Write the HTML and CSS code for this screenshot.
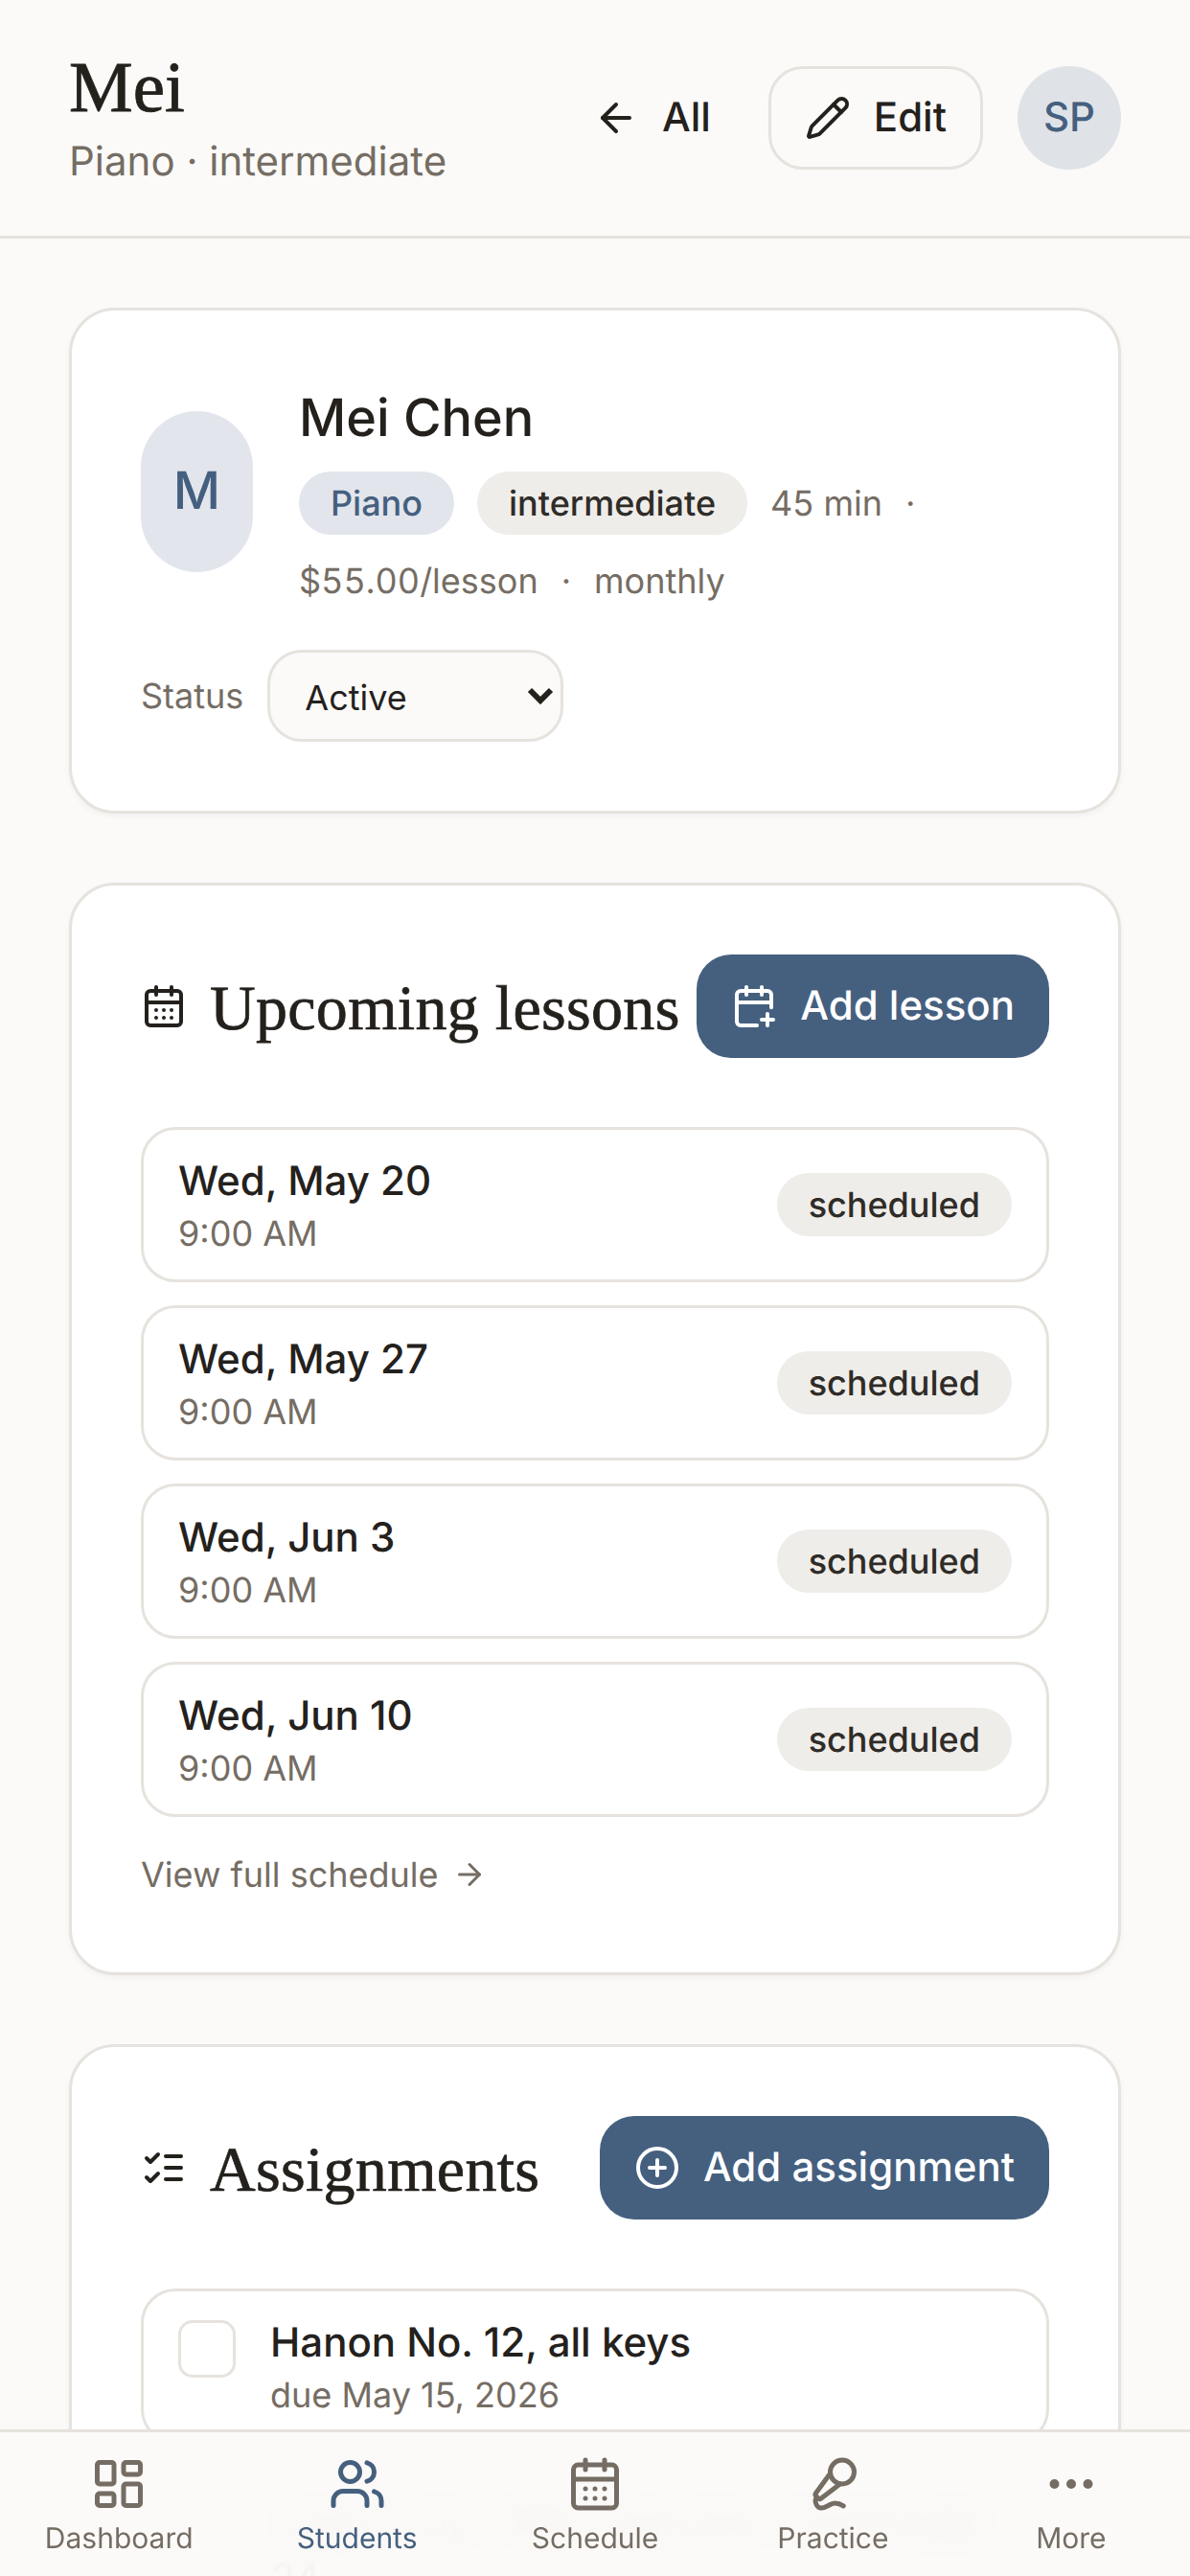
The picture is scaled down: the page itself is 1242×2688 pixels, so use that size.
FILE: index.html
```html
<!DOCTYPE html>
<html lang="en">
<head>
<meta charset="utf-8">
<title>Mei</title>
<link rel="stylesheet" href="styles.css">
</head>
<body>
<svg class="sprite" aria-hidden="true">
  <symbol id="i-left" viewBox="0 0 24 24"><path d="m12 19-7-7 7-7"/><path d="M19 12H5"/></symbol>
  <symbol id="i-right" viewBox="0 0 24 24"><path d="M5 12h14"/><path d="m12 5 7 7-7 7"/></symbol>
  <symbol id="i-pencil" viewBox="0 0 24 24"><path d="M21.174 6.812a1 1 0 0 0-3.986-3.987L3.842 16.174a2 2 0 0 0-.5.83l-1.321 4.352a.5.5 0 0 0 .623.622l4.353-1.32a2 2 0 0 0 .83-.497z"/><path d="m15 5 4 4"/></symbol>
  <symbol id="i-cal" viewBox="0 0 24 24"><path d="M8 2v4"/><path d="M16 2v4"/><rect width="18" height="18" x="3" y="4" rx="2"/><path d="M3 10h18"/><path d="M8 14h.01"/><path d="M12 14h.01"/><path d="M16 14h.01"/><path d="M8 18h.01"/><path d="M12 18h.01"/><path d="M16 18h.01"/></symbol>
  <symbol id="i-calplus" viewBox="0 0 24 24"><path d="M16 19h6"/><path d="M16 2v4"/><path d="M19 16v6"/><path d="M21 12.598V6a2 2 0 0 0-2-2H5a2 2 0 0 0-2 2v14a2 2 0 0 0 2 2h8.5"/><path d="M3 10h18"/><path d="M8 2v4"/></symbol>
  <symbol id="i-checks" viewBox="0 0 24 24"><path d="m3 17 2 2 4-4"/><path d="m3 7 2 2 4-4"/><path d="M13 6h8"/><path d="M13 12h8"/><path d="M13 18h8"/></symbol>
  <symbol id="i-plus" viewBox="0 0 24 24"><circle cx="12" cy="12" r="10"/><path d="M8 12h8"/><path d="M12 8v8"/></symbol>
  <symbol id="i-dash" viewBox="0 0 24 24"><rect width="7" height="9" x="3" y="3" rx="1"/><rect width="7" height="5" x="14" y="3" rx="1"/><rect width="7" height="9" x="14" y="12" rx="1"/><rect width="7" height="5" x="3" y="16" rx="1"/></symbol>
  <symbol id="i-users" viewBox="0 0 24 24"><path d="M16 21v-2a4 4 0 0 0-4-4H6a4 4 0 0 0-4 4v2"/><circle cx="9" cy="7" r="4"/><path d="M22 21v-2a4 4 0 0 0-3-3.87"/><path d="M16 3.13a4 4 0 0 1 0 7.75"/></symbol>
  <symbol id="i-mic" viewBox="0 0 24 24"><path d="m11 7.601-5.994 8.19a1 1 0 0 0 .1 1.298l.817.818a1 1 0 0 0 1.314.087L15.09 12"/><path d="M16.5 21.174C15.5 20.5 14.372 20 13 20c-2.058 0-3.928 2.356-6 2-2.072-.356-2.775-3.369-1.5-4.5"/><circle cx="16" cy="7" r="5"/></symbol>
  <symbol id="i-more" viewBox="0 0 24 24"><circle cx="12" cy="12" r="1"/><circle cx="19" cy="12" r="1"/><circle cx="5" cy="12" r="1"/></symbol>
</svg>

<header class="topbar">
  <div class="topbar-title">
    <h1 class="page-title">Mei</h1>
    <p class="page-sub">Piano · intermediate</p>
  </div>
  <div class="topbar-actions">
    <a class="btn btn-ghost"><svg class="icon icon-16"><use href="#i-left"/></svg>All</a>
    <a class="btn btn-outline"><svg class="icon icon-16"><use href="#i-pencil"/></svg>Edit</a>
    <div class="user-avatar">SP</div>
  </div>
</header>

<main class="content">
  <section class="card">
    <div class="profile">
      <div class="profile-avatar">M</div>
      <div class="profile-info">
        <h2 class="profile-name">Mei Chen</h2>
        <div class="profile-meta">
          <span class="chip chip-blue">Piano</span>
          <span class="chip">intermediate</span>
          <span class="meta">45 min</span>
          <span class="meta">·</span>
          <span class="meta meta-num">$55.00/lesson</span>
          <span class="meta">·</span>
          <span class="meta">monthly</span>
        </div>
      </div>
    </div>
    <div class="status-row">
      <label class="status-label" for="status">Status</label>
      <div class="select-wrap">
        <select class="status-select" id="status">
          <option>Active</option>
          <option>Paused</option>
        </select>
        <svg class="select-chevron" viewBox="0 0 28 19"><path d="M3 4l11 11L25 4"/></svg>
      </div>
    </div>
  </section>

  <section class="card">
    <div class="section-head">
      <div class="section-title"><svg class="icon icon-16"><use href="#i-cal"/></svg><h2>Upcoming lessons</h2></div>
      <a class="btn btn-primary"><svg class="icon icon-16"><use href="#i-calplus"/></svg>Add lesson</a>
    </div>
    <ul class="list">
      <li class="row"><div><div class="row-title">Wed, May 20</div><div class="row-sub">9:00 AM</div></div><span class="chip">scheduled</span></li>
      <li class="row"><div><div class="row-title">Wed, May 27</div><div class="row-sub">9:00 AM</div></div><span class="chip">scheduled</span></li>
      <li class="row"><div><div class="row-title">Wed, Jun 3</div><div class="row-sub">9:00 AM</div></div><span class="chip">scheduled</span></li>
      <li class="row"><div><div class="row-title">Wed, Jun 10</div><div class="row-sub">9:00 AM</div></div><span class="chip">scheduled</span></li>
    </ul>
    <a class="more-link">View full schedule<svg class="icon icon-12"><use href="#i-right"/></svg></a>
  </section>

  <section class="card">
    <div class="section-head">
      <div class="section-title"><svg class="icon icon-16"><use href="#i-checks"/></svg><h2>Assignments</h2></div>
      <a class="btn btn-primary"><svg class="icon icon-16"><use href="#i-plus"/></svg>Add assignment</a>
    </div>
    <ul class="list">
      <li class="row row-task"><span class="checkbox"></span><div><div class="row-title">Hanon No. 12, all keys</div><div class="row-sub">due May 15, 2026</div></div></li>
      <li class="row row-task"><span class="checkbox"></span><div><div class="row-title">Czerny Op. 599, exercises 19 through 24</div><div class="row-sub">due May 22, 2026</div></div></li>
    </ul>
  </section>
</main>

<nav class="tabbar">
  <a class="tab"><svg class="icon icon-20"><use href="#i-dash"/></svg><span>Dashboard</span></a>
  <a class="tab tab-active"><svg class="icon icon-20"><use href="#i-users"/></svg><span>Students</span></a>
  <a class="tab"><svg class="icon icon-20"><use href="#i-cal"/></svg><span>Schedule</span></a>
  <a class="tab"><svg class="icon icon-20"><use href="#i-mic"/></svg><span>Practice</span></a>
  <a class="tab"><svg class="icon icon-20"><use href="#i-more"/></svg><span>More</span></a>
</nav>
</body>
</html>
```
FILE: styles.css
```css
* { box-sizing: border-box; margin: 0; padding: 0; }

html, body {
  width: 1242px;
  height: 2688px;
  overflow: hidden;
}

body {
  position: relative;
  background: #fbfaf8;
  color: #24211d;
  font-family: Inter, "Liberation Sans", sans-serif;
  font-size: 42px;
  line-height: 60px;
  text-rendering: geometricPrecision;
}

.sprite { display: none; }

.icon {
  flex: none;
  fill: none;
  stroke: currentColor;
  stroke-width: 2;
  stroke-linecap: round;
  stroke-linejoin: round;
}
.icon-12 { width: 36px; height: 36px; }
.icon-16 { width: 48px; height: 48px; }
.icon-20 { width: 60px; height: 60px; }

/* top bar */
.topbar {
  display: flex;
  align-items: center;
  justify-content: space-between;
  height: 249px;
  padding: 0 72px;
  border-bottom: 3px solid #e6e2dd;
}
.page-title {
  font-family: "Liberation Serif", serif;
  font-size: 75px;
  line-height: 90px;
  font-weight: 400;
  -webkit-text-stroke: 0.8px currentColor;
}
.page-sub { margin-top: 2px; color: #756d64; font-size: 42px; line-height: 60px; }
.topbar-actions { display: flex; align-items: center; }

.btn {
  display: flex;
  align-items: center;
  gap: 24px;
  height: 108px;
  border-radius: 36px;
  font-weight: 450;
  white-space: nowrap;
}
.btn-ghost { padding: 0 36px; margin-right: 24px; }
.btn-outline { padding: 0 35px; border: 3px solid #e6e2dd; margin-right: 36px; }
.btn-primary { padding: 0 36px; background: #45607f; color: #fff; }

.user-avatar {
  display: grid;
  place-items: center;
  width: 108px;
  height: 108px;
  border-radius: 50%;
  background: #dfe3e7;
  color: #45607f;
  font-weight: 450;
}

/* main */
.content {
  display: flex;
  flex-direction: column;
  gap: 72px;
  height: 2439px;
  padding: 72px 72px 0;
  overflow: hidden;
}
.card {
  flex: none;
  padding: 72px;
  background: #fff;
  border: 3px solid #e6e2dd;
  border-radius: 48px;
  box-shadow: 0 3px 6px rgba(36, 33, 29, 0.04);
}

/* profile */
.profile { display: flex; align-items: center; gap: 48px; }
.profile-avatar {
  flex: none;
  display: grid;
  place-items: center;
  width: 117px;
  height: 168px;
  border-radius: 999px;
  background: #e2e6ec;
  color: #45607f;
  font-size: 54px;
  font-weight: 450;
}
.profile-info { flex: 1; min-width: 0; }
.profile-name { font-size: 54px; line-height: 82px; font-weight: 450; }
.profile-meta {
  display: flex;
  flex-wrap: wrap;
  align-items: center;
  gap: 24px;
  margin-top: 14px;
}
.meta { color: #756d64; font-size: 36px; line-height: 48px; }
.meta-num { font-variant-numeric: tabular-nums; }

.chip {
  display: inline-flex;
  align-items: center;
  height: 66px;
  padding: 0 33px;
  border-radius: 999px;
  background: #efedE9;
  color: #2f2c28;
  font-size: 36px;
  font-weight: 450;
  white-space: nowrap;
}
.chip-blue { background: #e2e6ec; color: #45607f; }

.status-row { display: flex; align-items: center; gap: 25px; margin-top: 48px; }
.status-label { color: #756d64; font-size: 36px; line-height: 48px; }
.select-wrap { position: relative; display: flex; }
.status-select {
  appearance: none;
  width: 309px;
  height: 96px;
  padding: 3px 12px 0 36px;
  background: #fbfaf8;
  border: 3px solid #e6e2dd;
  border-radius: 36px;
  color: #24211d;
  font-family: inherit;
  font-size: 36px;
}
.select-chevron {
  position: absolute;
  top: 38px;
  right: 10px;
  width: 28px;
  height: 19px;
  fill: none;
  stroke: #24211d;
  stroke-width: 6;
  pointer-events: none;
}

/* sections */
.section-head { display: flex; align-items: center; justify-content: space-between; gap: 12px; }
.section-title { display: flex; align-items: center; gap: 24px; }
.section-title h2 {
  padding-top: 6px;
  font-family: "Liberation Serif", serif;
  font-size: 66px;
  line-height: 84px;
  font-weight: 400;
  letter-spacing: 0.3px;
  white-space: nowrap;
  -webkit-text-stroke: 0.7px currentColor;
}

.list { display: flex; flex-direction: column; gap: 24px; margin-top: 72px; list-style: none; }
.row {
  display: flex;
  align-items: center;
  justify-content: space-between;
  padding: 24px 36px;
  border: 3px solid #e6e2dd;
  border-radius: 36px;
  background: #fff;
}
.row-task { justify-content: flex-start; align-items: flex-start; gap: 36px; }
.row-title { font-size: 42px; line-height: 60px; font-weight: 450; }
.row-sub { color: #756d64; font-size: 36px; line-height: 48px; }
.checkbox {
  flex: none;
  width: 60px;
  height: 60px;
  margin-top: 6px;
  border: 3px solid #e6e2dd;
  border-radius: 15px;
  background: #fff;
}

.more-link {
  display: flex;
  align-items: center;
  gap: 14px;
  margin: 36px 0 6px;
  color: #756d64;
  font-size: 36px;
  line-height: 48px;
}

/* tab bar */
.tabbar {
  position: absolute;
  left: 0;
  right: 0;
  bottom: 0;
  display: flex;
  height: 153px;
  padding-top: 24px;
  background: rgba(251, 250, 248, 0.95);
  border-top: 3px solid #e6e2dd;
  backdrop-filter: blur(24px);
}
.tab {
  flex: 1;
  display: flex;
  flex-direction: column;
  align-items: center;
  gap: 6px;
  color: #756d64;
  font-size: 30px;
  line-height: 42px;
}
.tab-active { color: #45607f; }
```
